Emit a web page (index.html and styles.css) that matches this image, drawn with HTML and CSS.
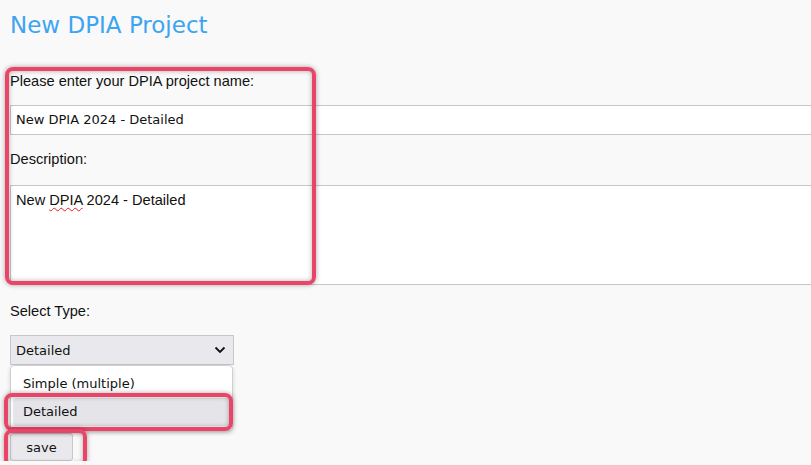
FILE: index.html
```html
<!DOCTYPE html>
<html>
<head>
<meta charset="utf-8">
<link rel="stylesheet" href="styles.css">
</head>
<body>
<div class="page">
  <h1 class="title">New DPIA Project</h1>
  <div class="group">
    <label class="label label-name">Please enter your DPIA project name:</label>
    <div class="field input">New DPIA 2024 - Detailed</div>
    <label class="label label-desc">Description:</label>
    <div class="field textarea">New <span class="misspelled">DPIA</span> 2024 - Detailed</div>
    <div class="hl hl-main"></div>
  </div>
  <label class="label label-type">Select Type:</label>
  <div class="select-wrap">
    <div class="select">
      <span>Detailed</span>
      <svg class="chev" width="12" height="8" viewBox="0 0 12 8"><path d="M1.5 1.5 L6 6 L10.5 1.5" fill="none" stroke="#111" stroke-width="1.8"/></svg>
    </div>
    <div class="menu">
      <div class="opt">Simple (multiple)</div>
      <div class="opt opt-sel">Detailed</div>
    </div>
    <div class="hl hl-opt"></div>
  </div>
  <div class="btn-wrap">
    <button class="btn">save</button>
    <div class="hl hl-btn"></div>
  </div>
</div>
</body>
</html>
```
FILE: styles.css
```css
html, body {
  margin: 0;
  padding: 0;
  background: #f9f9f9;
  overflow: hidden;
}
.page {
  padding: 0 0 0 10px;
  font-family: "Liberation Sans", Arial, sans-serif;
  font-size: 14.6px;
  color: #111;
}
.title {
  margin: 0;
  padding-top: 11px;
  height: 41px;
  box-sizing: border-box;
  font-family: "DejaVu Sans", sans-serif;
  font-weight: normal;
  font-size: 23px;
  color: #3da5f0;
  line-height: 28px;
}
.group {
  position: relative;
}
.label {
  display: block;
  line-height: 17px;
}
.label-name {
  padding-top: 32px;
  height: 64px;
  box-sizing: border-box;
}
.field {
  background: #fff;
  border: 1px solid #c6c6c6;
  border-right: none;
  box-sizing: border-box;
  font-family: "DejaVu Sans", sans-serif;
  font-size: 13px;
  color: #111;
  padding-left: 5px;
  width: 830px;
}
.input {
  height: 30px;
  line-height: 28px;
}
.label-desc {
  padding-top: 16px;
  height: 50px;
  box-sizing: border-box;
}
.textarea {
  height: 100px;
  padding-top: 5px;
  line-height: 18px;
  white-space: pre;
  font-family: "Liberation Sans", Arial, sans-serif;
  font-size: 14.6px;
}
.misspelled {
  text-decoration: underline wavy #e02020;
  text-decoration-thickness: 1px;
  text-underline-offset: 2px;
}
.label-type {
  padding-top: 18px;
  height: 50px;
  box-sizing: border-box;
}
.select-wrap {
  position: relative;
  width: 224px;
}
.select {
  height: 30px;
  box-sizing: border-box;
  background: #e9e9ed;
  border: 1px solid #c8c8c8;
  display: flex;
  align-items: center;
  justify-content: space-between;
  padding: 0 7px 0 5px;
  font-family: "DejaVu Sans", sans-serif;
  font-size: 13px;
}
.chev { display: block; }
.menu {
  position: absolute;
  left: 0;
  top: 30px;
  width: 223px;
  height: 66px;
  box-sizing: border-box;
  background: #fff;
  border: 1px solid #d0d0d0;
  border-radius: 4px;
  box-shadow: 0 2px 4px rgba(0,0,0,0.15);
  padding: 4px 2px;
  font-family: "DejaVu Sans", sans-serif;
  font-size: 13px;
  z-index: 2;
}
.opt {
  height: 28px;
  line-height: 28px;
  padding-left: 10px;
}
.opt-sel {
  background: #e4e4e9;
  border-radius: 3px;
}
.btn-wrap {
  position: relative;
  margin-top: 68px;
  width: 63px;
}
.btn {
  display: block;
  width: 63px;
  height: 28px;
  background: #e9e9ed;
  border: 1px solid #c8c8c8;
  border-radius: 3px;
  font-family: "DejaVu Sans", sans-serif;
  font-size: 13px;
  color: #111;
  padding: 0;
}
.hl {
  position: absolute;
  border: 4px solid #ea4468;
  border-radius: 8px;
  box-shadow: 0 0 5px rgba(0,0,0,0.35), inset 0 0 5px rgba(0,0,0,0.3);
  z-index: 5;
  pointer-events: none;
}
.hl-main {
  left: -5px;
  top: 26px;
  width: 303px;
  height: 210px;
}
.hl-opt {
  left: -6px;
  top: 58px;
  width: 221px;
  height: 30px;
}
.hl-btn {
  left: -6px;
  top: -4px;
  width: 75px;
  height: 30px;
}
```
